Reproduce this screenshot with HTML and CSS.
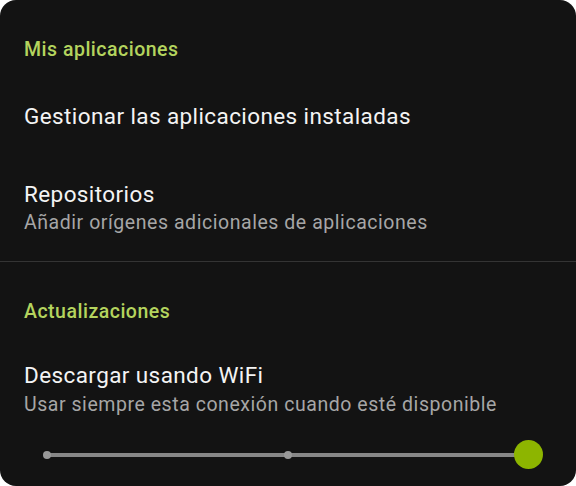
FILE: index.html
```html
<!DOCTYPE html>
<html lang="es">
<head>
<meta charset="utf-8">
<link rel="stylesheet" href="styles.css">
</head>
<body>
<div class="card">
  <section class="group">
    <h2 class="group-title">Mis aplicaciones</h2>
    <div class="item">
      <div class="item-title">Gestionar las aplicaciones instaladas</div>
    </div>
    <div class="item">
      <div class="item-title">Repositorios</div>
      <div class="item-sub">Añadir orígenes adicionales de aplicaciones</div>
    </div>
  </section>
  <section class="group group-second">
    <h2 class="group-title">Actualizaciones</h2>
    <div class="item item-slider">
      <div class="item-title">Descargar usando WiFi</div>
      <div class="item-sub">Usar siempre esta conexión cuando esté disponible</div>
      <div class="slider">
        <span class="stop stop-start"></span>
        <span class="stop stop-mid"></span>
        <span class="thumb"></span>
      </div>
    </div>
  </section>
</div>
</body>
</html>
```
FILE: styles.css
```css
html, body {
  margin: 0;
  padding: 0;
  background: #ffffff;
}
body {
  font-family: Roboto, "Noto Sans", sans-serif;
  width: 576px;
  height: 486px;
  overflow: hidden;
}
.card {
  box-sizing: border-box;
  width: 576px;
  height: 486px;
  background: #131313;
  border-radius: 16px;
  overflow: hidden;
}
.group {
  padding-top: 38px;
}
.group + .group {
  border-top: 1px solid #343434;
}
.group-title {
  margin: 0;
  padding: 0 24px 15px;
  font-size: 19.5px;
  line-height: 24px;
  font-weight: 500;
  letter-spacing: 0.5px;
  color: #b4d45e;
}
.item {
  padding: 25px 24px;
}
.item-title {
  font-size: 22.5px;
  line-height: 28px;
  letter-spacing: 0.4px;
  color: #f4f4f4;
}
.item-sub {
  margin-top: 2px;
  font-size: 19.5px;
  line-height: 26px;
  letter-spacing: 0.55px;
  color: #a6a6a6;
}
.item-slider {
  padding-top: 22px;
  padding-bottom: 0;
}
.item-slider .item-sub {
  margin-top: 3px;
}
.slider {
  position: relative;
  margin: 22px 0 0 23px;
  width: 481px;
  height: 30px;
}
.slider::before {
  content: "";
  position: absolute;
  left: 0;
  right: 0;
  top: 13px;
  height: 4px;
  background: #878787;
}
.stop {
  position: absolute;
  top: 11px;
  width: 8px;
  height: 8px;
  margin-left: -4px;
  border-radius: 50%;
  background: #999999;
}
.stop-start { left: 0; }
.stop-mid { left: 50%; }
.thumb {
  position: absolute;
  left: 100%;
  top: 0;
  width: 29px;
  height: 29px;
  margin-left: -14.5px;
  border-radius: 50%;
  background: #8db500;
}
```
